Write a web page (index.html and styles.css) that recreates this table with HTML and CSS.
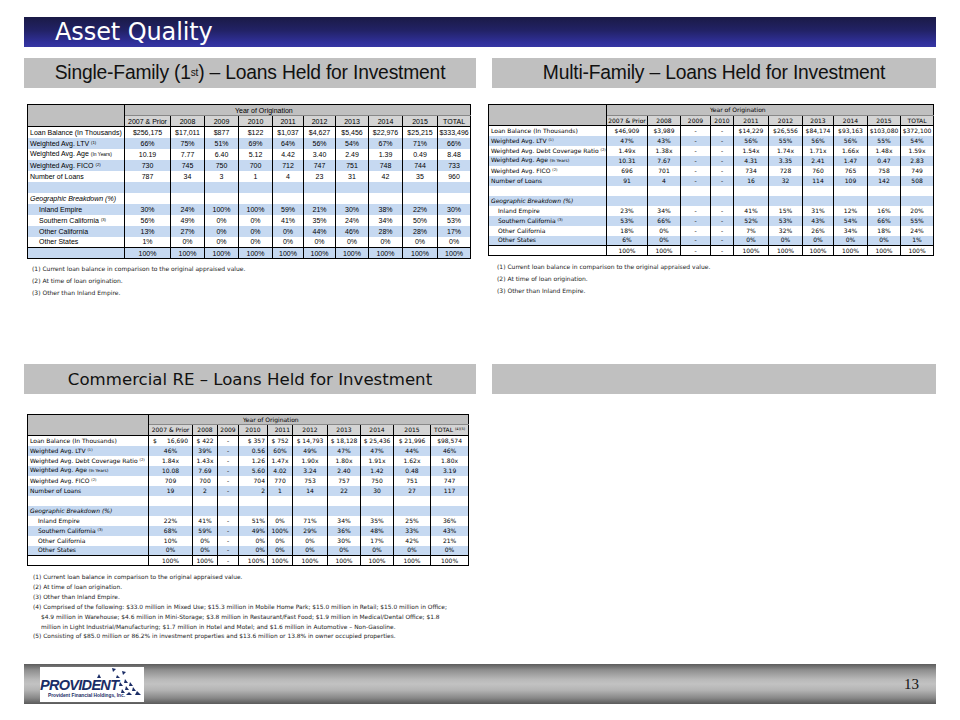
FILE: index.html
```html
<!DOCTYPE html>
<html lang="en">
<head>
<meta charset="utf-8">
<title>Asset Quality</title>
<link rel="stylesheet" href="styles.css">
</head>
<body>
<div class="slide">
  <header class="title-bar"><h1>Asset Quality</h1></header>

  <div class="grid">
    <!-- Single-Family -->
    <section class="panel">
      <div class="sec-head narrow">Single-Family (1<sup>st</sup>) – Loans Held for Investment</div>
      <table class="tbl tl">
        <colgroup><col><col><col><col><col><col><col><col><col><col><col></colgroup>
        <tr class="h1"><td class="corner" rowspan="2"></td><td class="yo" colspan="10">Year of Origination</td></tr>
        <tr class="h2"><td>2007 &amp; Prior</td><td>2008</td><td>2009</td><td>2010</td><td>2011</td><td>2012</td><td>2013</td><td>2014</td><td>2015</td><td>TOTAL</td></tr>
        <tr><td class="lbl">Loan Balance (In Thousands)</td><td>$256,175</td><td>$17,011</td><td>$877</td><td>$122</td><td>$1,037</td><td>$4,627</td><td>$5,456</td><td>$22,976</td><td>$25,215</td><td>$333,496</td></tr>
        <tr class="b"><td class="lbl">Weighted Avg. LTV <sup>(1)</sup></td><td>66%</td><td>75%</td><td>51%</td><td>69%</td><td>64%</td><td>56%</td><td>54%</td><td>67%</td><td>71%</td><td>66%</td></tr>
        <tr><td class="lbl">Weighted Avg. Age <small>(In Years)</small></td><td>10.19</td><td>7.77</td><td>6.40</td><td>5.12</td><td>4.42</td><td>3.40</td><td>2.49</td><td>1.39</td><td>0.49</td><td>8.48</td></tr>
        <tr class="b"><td class="lbl">Weighted Avg. FICO <sup>(2)</sup></td><td>730</td><td>745</td><td>750</td><td>700</td><td>712</td><td>747</td><td>751</td><td>748</td><td>744</td><td>733</td></tr>
        <tr><td class="lbl">Number of Loans</td><td>787</td><td>34</td><td>3</td><td>1</td><td>4</td><td>23</td><td>31</td><td>42</td><td>35</td><td>960</td></tr>
        <tr class="b"><td class="lbl"></td><td></td><td></td><td></td><td></td><td></td><td></td><td></td><td></td><td></td><td></td></tr>
        <tr><td class="lbl geo">Geographic Breakdown (%)</td><td></td><td></td><td></td><td></td><td></td><td></td><td></td><td></td><td></td><td></td></tr>
        <tr class="b"><td class="lbl ind">Inland Empire</td><td>30%</td><td>24%</td><td>100%</td><td>100%</td><td>59%</td><td>21%</td><td>30%</td><td>38%</td><td>22%</td><td>30%</td></tr>
        <tr><td class="lbl ind">Southern California <sup>(3)</sup></td><td>56%</td><td>49%</td><td>0%</td><td>0%</td><td>41%</td><td>35%</td><td>24%</td><td>34%</td><td>50%</td><td>53%</td></tr>
        <tr class="b"><td class="lbl ind">Other California</td><td>13%</td><td>27%</td><td>0%</td><td>0%</td><td>0%</td><td>44%</td><td>46%</td><td>28%</td><td>28%</td><td>17%</td></tr>
        <tr><td class="lbl ind">Other States</td><td>1%</td><td>0%</td><td>0%</td><td>0%</td><td>0%</td><td>0%</td><td>0%</td><td>0%</td><td>0%</td><td>0%</td></tr>
        <tr class="b tot"><td class="lbl"></td><td>100%</td><td>100%</td><td>100%</td><td>100%</td><td>100%</td><td>100%</td><td>100%</td><td>100%</td><td>100%</td><td>100%</td></tr>
      </table>
      <div class="notes n-left">
        <p>(1) Current loan balance in comparison to the original appraised value.</p>
        <p>(2) At time of loan origination.</p>
        <p>(3) Other than Inland Empire.</p>
      </div>
    </section>

    <!-- Multi-Family -->
    <section class="panel">
      <div class="sec-head narrow">Multi-Family – Loans Held for Investment</div>
      <table class="tbl tr">
        <colgroup><col><col><col><col><col><col><col><col><col><col><col></colgroup>
        <tr class="h1"><td class="corner" rowspan="2"></td><td class="yo" colspan="10">Year of Origination</td></tr>
        <tr class="h2"><td>2007 &amp; Prior</td><td>2008</td><td>2009</td><td>2010</td><td>2011</td><td>2012</td><td>2013</td><td>2014</td><td>2015</td><td>TOTAL</td></tr>
        <tr><td class="lbl">Loan Balance (In Thousands)</td><td>$46,909</td><td>$3,989</td><td>-</td><td>-</td><td>$14,229</td><td>$26,556</td><td>$84,174</td><td>$93,163</td><td>$103,080</td><td>$372,100</td></tr>
        <tr class="b"><td class="lbl">Weighted Avg. LTV <sup>(1)</sup></td><td>47%</td><td>43%</td><td>-</td><td>-</td><td>56%</td><td>55%</td><td>56%</td><td>56%</td><td>55%</td><td>54%</td></tr>
        <tr><td class="lbl">Weighted Avg. Debt Coverage Ratio <sup>(2)</sup></td><td>1.49x</td><td>1.38x</td><td>-</td><td>-</td><td>1.54x</td><td>1.74x</td><td>1.71x</td><td>1.66x</td><td>1.48x</td><td>1.59x</td></tr>
        <tr class="b"><td class="lbl">Weighted Avg. Age <small>(In Years)</small></td><td>10.31</td><td>7.67</td><td>-</td><td>-</td><td>4.31</td><td>3.35</td><td>2.41</td><td>1.47</td><td>0.47</td><td>2.83</td></tr>
        <tr><td class="lbl">Weighted Avg. FICO <sup>(2)</sup></td><td>696</td><td>701</td><td>-</td><td>-</td><td>734</td><td>728</td><td>760</td><td>765</td><td>758</td><td>749</td></tr>
        <tr class="b"><td class="lbl">Number of Loans</td><td>91</td><td>4</td><td>-</td><td>-</td><td>16</td><td>32</td><td>114</td><td>109</td><td>142</td><td>508</td></tr>
        <tr><td class="lbl"></td><td></td><td></td><td></td><td></td><td></td><td></td><td></td><td></td><td></td><td></td></tr>
        <tr class="b"><td class="lbl geo">Geographic Breakdown (%)</td><td></td><td></td><td></td><td></td><td></td><td></td><td></td><td></td><td></td><td></td></tr>
        <tr><td class="lbl ind">Inland Empire</td><td>23%</td><td>34%</td><td>-</td><td>-</td><td>41%</td><td>15%</td><td>31%</td><td>12%</td><td>16%</td><td>20%</td></tr>
        <tr class="b"><td class="lbl ind">Southern California <sup>(3)</sup></td><td>53%</td><td>66%</td><td>-</td><td>-</td><td>52%</td><td>53%</td><td>43%</td><td>54%</td><td>66%</td><td>55%</td></tr>
        <tr><td class="lbl ind">Other California</td><td>18%</td><td>0%</td><td>-</td><td>-</td><td>7%</td><td>32%</td><td>26%</td><td>34%</td><td>18%</td><td>24%</td></tr>
        <tr class="b"><td class="lbl ind">Other States</td><td>6%</td><td>0%</td><td>-</td><td>-</td><td>0%</td><td>0%</td><td>0%</td><td>0%</td><td>0%</td><td>1%</td></tr>
        <tr class="tot"><td class="lbl"></td><td>100%</td><td>100%</td><td>-</td><td>-</td><td>100%</td><td>100%</td><td>100%</td><td>100%</td><td>100%</td><td>100%</td></tr>
      </table>
      <div class="notes n-right">
        <p>(1) Current loan balance in comparison to the original appraised value.</p>
        <p>(2) At time of loan origination.</p>
        <p>(3) Other than Inland Empire.</p>
      </div>
    </section>

    <!-- Commercial RE -->
    <section class="panel">
      <div class="sec-head wide">Commercial RE – Loans Held for Investment</div>
      <table class="tbl tc">
        <colgroup><col><col><col><col><col><col><col><col><col><col><col></colgroup>
        <tr class="h1"><td class="corner" rowspan="2"></td><td class="yo" colspan="10">Year of Origination</td></tr>
        <tr class="h2"><td>2007 &amp; Prior</td><td>2008</td><td>2009</td><td>2010</td><td>2011</td><td>2012</td><td>2013</td><td>2014</td><td>2015</td><td>TOTAL <sup>(4)(5)</sup></td></tr>
        <tr><td class="lbl">Loan Balance (In Thousands)</td><td class="money"><span class="cur">$</span>16,690</td><td>$ 422</td><td>-</td><td>$ 357</td><td>$ 752</td><td>$ 14,793</td><td>$ 18,128</td><td>$ 25,436</td><td>$ 21,996</td><td>$98,574</td></tr>
        <tr class="b"><td class="lbl">Weighted Avg. LTV <sup>(1)</sup></td><td>46%</td><td>39%</td><td>-</td><td>0.56</td><td>60%</td><td>49%</td><td>47%</td><td>47%</td><td>44%</td><td>46%</td></tr>
        <tr><td class="lbl">Weighted Avg. Debt Coverage Ratio <sup>(2)</sup></td><td>1.84x</td><td>1.43x</td><td>-</td><td>1.26</td><td>1.47x</td><td>1.90x</td><td>1.80x</td><td>1.91x</td><td>1.62x</td><td>1.80x</td></tr>
        <tr class="b"><td class="lbl">Weighted Avg. Age <small>(In Years)</small></td><td>10.08</td><td>7.69</td><td>-</td><td>5.60</td><td>4.02</td><td>3.24</td><td>2.40</td><td>1.42</td><td>0.48</td><td>3.19</td></tr>
        <tr><td class="lbl">Weighted Avg. FICO <sup>(2)</sup></td><td>709</td><td>700</td><td>-</td><td>704</td><td>770</td><td>753</td><td>757</td><td>750</td><td>751</td><td>747</td></tr>
        <tr class="b"><td class="lbl">Number of Loans</td><td>19</td><td>2</td><td>-</td><td>2</td><td>1</td><td>14</td><td>22</td><td>30</td><td>27</td><td>117</td></tr>
        <tr><td class="lbl"></td><td></td><td></td><td></td><td></td><td></td><td></td><td></td><td></td><td></td><td></td></tr>
        <tr class="b"><td class="lbl geo">Geographic Breakdown (%)</td><td></td><td></td><td></td><td></td><td></td><td></td><td></td><td></td><td></td><td></td></tr>
        <tr><td class="lbl ind">Inland Empire</td><td>22%</td><td>41%</td><td>-</td><td>51%</td><td>0%</td><td>71%</td><td>34%</td><td>35%</td><td>25%</td><td>36%</td></tr>
        <tr class="b"><td class="lbl ind">Southern California <sup>(3)</sup></td><td>68%</td><td>59%</td><td>-</td><td>49%</td><td>100%</td><td>29%</td><td>36%</td><td>48%</td><td>33%</td><td>43%</td></tr>
        <tr><td class="lbl ind">Other California</td><td>10%</td><td>0%</td><td>-</td><td>0%</td><td>0%</td><td>0%</td><td>30%</td><td>17%</td><td>42%</td><td>21%</td></tr>
        <tr class="b"><td class="lbl ind">Other States</td><td>0%</td><td>0%</td><td>-</td><td>0%</td><td>0%</td><td>0%</td><td>0%</td><td>0%</td><td>0%</td><td>0%</td></tr>
        <tr class="tot"><td class="lbl"></td><td>100%</td><td>100%</td><td>-</td><td>100%</td><td>100%</td><td>100%</td><td>100%</td><td>100%</td><td>100%</td><td>100%</td></tr>
      </table>
      <div class="notes n-com">
        <p>(1) Current loan balance in comparison to the original appraised value.</p>
        <p>(2) At time of loan origination.</p>
        <p>(3) Other than Inland Empire.</p>
        <p>(4) Comprised of the following: $33.0 million in Mixed Use; $15.3 million in Mobile Home Park; $15.0 million in Retail; $15.0 million in Office;</p>
        <p class="cont">$4.9 million in Warehouse; $4.6 million in Mini-Storage; $3.8 million in Restaurant/Fast Food; $1.9 million in Medical/Dental Office; $1.8</p>
        <p class="cont">million in Light Industrial/Manufacturing; $1.7 million in Hotel and Motel; and $1.6 million in Automotive – Non-Gasoline.</p>
        <p>(5) Consisting of $85.0 million or 86.2% in investment properties and $13.6 million or 13.8% in owner occupied properties.</p>
      </div>
    </section>

    <section class="panel">
      <div class="sec-head"></div>
    </section>
  </div>

  <footer class="footer">
    <div class="logo">
      <svg class="logo-mark" viewBox="0 0 104 35" width="104" height="35" aria-hidden="true">
        <g fill="#1b2d66">
          <polygon points="72,1 76,2 73,5"/>
          <polygon points="82,4 86,5 83,8"/>
          <polygon points="77,8 80,11 76,11"/>
          <polygon points="57,11 59,7 61,11"/>
          <polygon points="85,12 88,16 84,16"/>
          <polygon points="80,15 83,19 79,19"/>
          <polygon points="90,15 93,19 89,19"/>
          <polygon points="86,19 89,23 85,23"/>
          <polygon points="93,20 96,24 92,24"/>
          <polygon points="82,22 85,26 81,26"/>
          <polygon points="97,24 101,28 95,28"/>
          <polygon points="89,25 92,28 86,28"/>
        </g>
      </svg>
      <span class="logo-name">PROVIDENT</span>
      <span class="logo-sub">Provident Financial Holdings, Inc.</span>
    </div>
    <span class="pgnum">13</span>
  </footer>
</div>
</body>
</html>
```

FILE: styles.css
```css
* { box-sizing: border-box; margin: 0; padding: 0; }

body {
  width: 960px;
  height: 720px;
  background: #ffffff;
  font-family: "DejaVu Sans", sans-serif;
  color: #000;
  overflow: hidden;
}

.slide { padding: 17px 24px 0; }

/* Title */
.title-bar {
  height: 30px;
  padding-left: 31px;
  display: flex;
  align-items: center;
  background: linear-gradient(to bottom, #1a1a46 0%, #222266 45%, #30309a 85%, #3636a4 100%);
}
.title-bar h1 {
  color: #fff;
  font-family: "DejaVu Sans", sans-serif;
  font-weight: normal;
  font-size: 24px;
  line-height: 1;
  letter-spacing: -0.1px;
}

/* Layout */
.grid {
  margin-top: 11px;
  display: grid;
  grid-template-columns: 452px 444px;
  grid-template-rows: 306px 300px;
  column-gap: 16px;
}

.sec-head {
  height: 30px;
  background: #c0c0c0;
  display: flex;
  align-items: center;
  justify-content: center;
  color: #111;
}
.sec-head.narrow {
  font-family: "Liberation Sans", sans-serif;
  font-size: 19.3px;
  letter-spacing: -0.2px;
}
.sec-head.narrow sup { font-size: 10px; vertical-align: 7px; line-height: 0; }
.sec-head.wide {
  font-family: "DejaVu Sans", sans-serif;
  font-size: 16.6px;
}

/* Tables */
.tbl {
  border-collapse: collapse;
  table-layout: fixed;
  border: 1px solid #000;
}
.tbl td {
  padding: 0;
  text-align: center;
  vertical-align: middle;
  white-space: nowrap;
  overflow: hidden;
  border-left: 1px solid #000;
  border-right: 1px solid #000;
  line-height: 1;
}
.tbl tr.b td { background: #c6d9f1; }
.tbl .h1 td { background: #c0c0c0; }
.tbl .h2 td { background: #d4d4d4; border-bottom: 1px solid #000; }
.tbl td.corner { background: #c0c0c0; border-bottom: 1px solid #000; }
.tbl td.yo { text-align: left; border-bottom: 1px solid #888; }
.tbl tr.tot td { border-top: 1px solid #000; }
.tbl td.lbl { text-align: left; padding-left: 2px; }
.tbl td.ind { padding-left: 10px; }
.tbl td.geo { font-style: italic; }
.tbl sup { font-size: 0.6em; vertical-align: 0.5em; line-height: 0; }
.tbl small { font-size: 0.7em; }

/* Single-family table */
.tl {
  margin: 16px 0 0 3px;
  width: 443px;
  font-family: "Liberation Sans", sans-serif;
  font-size: 7px;
}
.tl td { height: 11px; }
.tl td.yo { padding-left: 110px; }
.tl td.ind { padding-left: 11px; }
.tl col:nth-child(1) { width: 97px; }
.tl col:nth-child(2) { width: 46px; }
.tl col:nth-child(3) { width: 34px; }
.tl col:nth-child(4) { width: 34px; }
.tl col:nth-child(5) { width: 34px; }
.tl col:nth-child(6) { width: 31px; }
.tl col:nth-child(7) { width: 32px; }
.tl col:nth-child(8) { width: 33px; }
.tl col:nth-child(9) { width: 34px; }
.tl col:nth-child(10) { width: 35px; }
.tl col:nth-child(11) { width: 33px; }

/* Multi-family table */
.tr {
  margin: 16px 0 0 -4px;
  width: 445px;
  font-family: "DejaVu Sans", sans-serif;
  font-size: 6px;
}
.tr td { height: 10px; }
.tr .h1 td { height: 11px; }
.tr td.yo { padding-left: 103px; }
.tr td.ind { padding-left: 9px; }
.tr col:nth-child(1) { width: 118px; }
.tr col:nth-child(2) { width: 41px; }
.tr col:nth-child(3) { width: 33px; }
.tr col:nth-child(4) { width: 30px; }
.tr col:nth-child(5) { width: 23px; }
.tr col:nth-child(6) { width: 35px; }
.tr col:nth-child(7) { width: 34px; }
.tr col:nth-child(8) { width: 31px; }
.tr col:nth-child(9) { width: 34px; }
.tr col:nth-child(10) { width: 33px; }
.tr col:nth-child(11) { width: 33px; }

/* Commercial table */
.tc {
  margin: 20px 0 0 3px;
  width: 441px;
  font-family: "DejaVu Sans", sans-serif;
  font-size: 6px;
}
.tc td { height: 10px; }
.tc .h2 td { height: 11px; }
.tc td.yo { padding-left: 94px; }
.tc td.money { text-align: right; padding-right: 4px; }
.tc .cur { float: left; padding-left: 4px; }
.tc tr td:nth-child(5) { text-align: right; padding-right: 2px; }
.tc tr.h2 td:nth-child(4) { text-align: center; padding-right: 0; }
.tc tr.h1 td:nth-child(5) { text-align: center; }
.tc col:nth-child(1) { width: 121px; }
.tc col:nth-child(2) { width: 44px; }
.tc col:nth-child(3) { width: 25px; }
.tc col:nth-child(4) { width: 21px; }
.tc col:nth-child(5) { width: 29px; }
.tc col:nth-child(6) { width: 25px; }
.tc col:nth-child(7) { width: 35px; }
.tc col:nth-child(8) { width: 33px; }
.tc col:nth-child(9) { width: 33px; }
.tc col:nth-child(10) { width: 37px; }
.tc col:nth-child(11) { width: 38px; }

/* Footnotes */
.notes {
  font-family: "DejaVu Sans", sans-serif;
  font-size: 6px;
  color: #222;
  white-space: nowrap;
}
.notes p { line-height: 12px; }
.n-left { margin-top: 4px; padding-left: 8px; }
.n-right { margin-top: 5px; padding-left: 5px; }
.n-com { margin-top: 7px; padding-left: 9px; font-size: 5.9px; }
.n-com p { line-height: 9.9px; }
.n-com p.cont { padding-left: 8px; }

/* Footer */
.footer {
  height: 40px;
  display: flex;
  align-items: center;
  justify-content: space-between;
  padding: 0 17px 0 16px;
  background: linear-gradient(to bottom, #5c5c5c 0%, #8e8e8e 15%, #b8b8b8 38%, #c2c2c2 50%, #b4b4b4 65%, #888 85%, #5a5a5a 100%);
}
.logo {
  position: relative;
  width: 104px;
  height: 35px;
  background: #fff;
  display: flex;
  flex-direction: column;
  padding: 11px 0 0 0;
}
.logo-mark { position: absolute; left: 0; top: 0; }
.logo-name {
  font-family: "Liberation Sans", sans-serif;
  font-weight: bold;
  font-style: italic;
  font-size: 14.5px;
  letter-spacing: -0.7px;
  line-height: 14px;
  color: #1b2d66;
}
.logo-sub {
  font-family: "Liberation Sans", sans-serif;
  font-weight: bold;
  font-size: 4.8px;
  line-height: 7px;
  color: #1b2d66;
  padding-left: 8px;
}
.pgnum {
  font-family: "Liberation Serif", serif;
  font-size: 15px;
  color: #111;
}
```
